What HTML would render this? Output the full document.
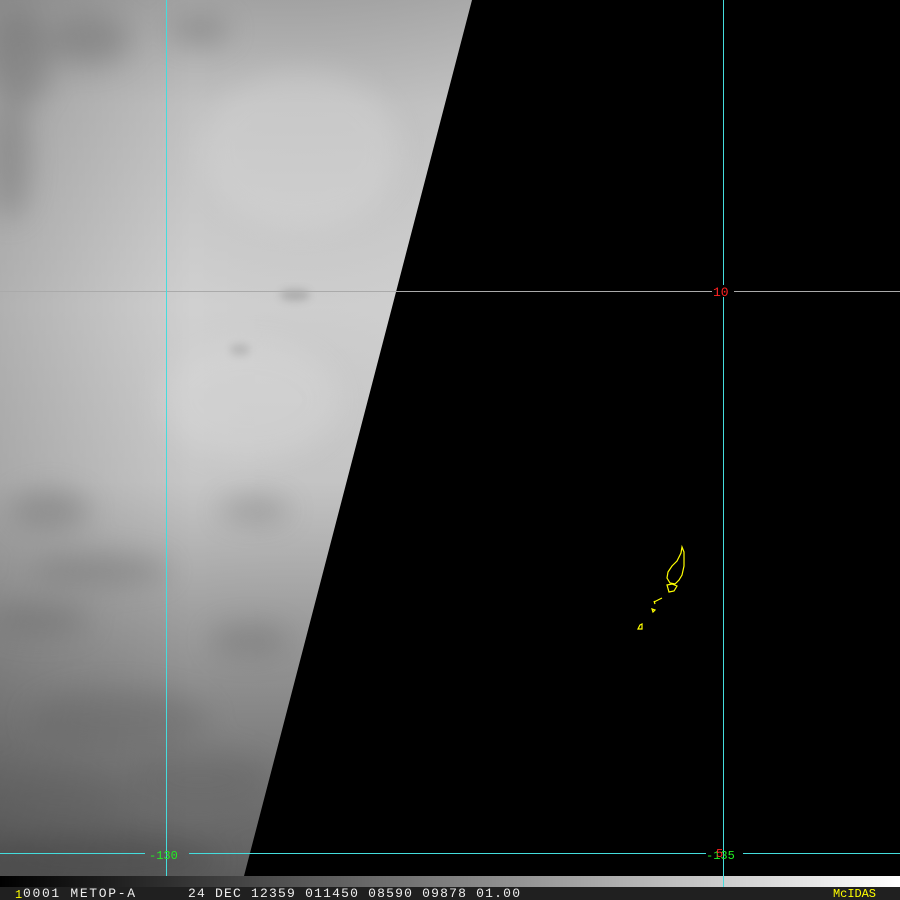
<!DOCTYPE html>
<html><head><meta charset="utf-8"><style>
html,body{margin:0;padding:0;background:#000;width:900px;height:900px;overflow:hidden}
svg{display:block}
</style></head><body>
<svg width="900" height="900" viewBox="0 0 900 900" xmlns="http://www.w3.org/2000/svg">
<defs>
<linearGradient id="cg" x1="0" y1="0" x2="0" y2="1">
<stop offset="0" stop-color="#a4a4a4"/>
<stop offset="0.12" stop-color="#c0c0c0"/>
<stop offset="0.35" stop-color="#d0d0d0"/>
<stop offset="0.55" stop-color="#c6c6c6"/>
<stop offset="0.7" stop-color="#a0a0a0"/>
<stop offset="0.85" stop-color="#808080"/>
<stop offset="1" stop-color="#5e5e5e"/>
</linearGradient>
<linearGradient id="hg" x1="0" y1="0" x2="1" y2="0">
<stop offset="0" stop-color="#000" stop-opacity="0.15"/>
<stop offset="0.4" stop-color="#000" stop-opacity="0"/>
<stop offset="1" stop-color="#fff" stop-opacity="0.06"/>
</linearGradient>
<linearGradient id="bar" x1="0" y1="0" x2="1" y2="0">
<stop offset="0" stop-color="#000"/>
<stop offset="1" stop-color="#fff"/>
</linearGradient>
<clipPath id="sw"><polygon points="0,0 472,0 244,876 0,876"/></clipPath>
<filter id="b8"><feGaussianBlur stdDeviation="14"/></filter>
<filter id="b4"><feGaussianBlur stdDeviation="4"/></filter>
</defs>
<rect width="900" height="900" fill="#000"/>
<g clip-path="url(#sw)">
<rect width="480" height="876" fill="url(#cg)"/>
<rect width="480" height="876" fill="url(#hg)"/>
<g filter="url(#b8)" fill="#606060" opacity="0.35">
<ellipse cx="20" cy="60" rx="30" ry="50"/>
<ellipse cx="90" cy="40" rx="40" ry="25"/>
<ellipse cx="200" cy="30" rx="30" ry="15"/>
<ellipse cx="10" cy="160" rx="20" ry="60"/>
<ellipse cx="50" cy="510" rx="40" ry="20"/>
<ellipse cx="255" cy="510" rx="35" ry="12"/>
<ellipse cx="100" cy="570" rx="70" ry="15"/>
<ellipse cx="40" cy="620" rx="50" ry="15"/>
<ellipse cx="250" cy="640" rx="40" ry="15"/>
<ellipse cx="120" cy="720" rx="90" ry="30"/>
<ellipse cx="200" cy="780" rx="70" ry="30"/>
<ellipse cx="60" cy="800" rx="70" ry="30"/>
<ellipse cx="100" cy="860" rx="120" ry="25" fill="#404040"/>
</g>
<g filter="url(#b4)" fill="#808080" opacity="0.4">
<ellipse cx="240" cy="350" rx="10" ry="6"/>
<ellipse cx="295" cy="295" rx="15" ry="6"/>
</g>
<g filter="url(#b8)" fill="#e0e0e0" opacity="0.3">
<ellipse cx="300" cy="150" rx="100" ry="80"/>
<ellipse cx="250" cy="400" rx="90" ry="60"/>
</g>
</g>
<!-- grid -->
<line x1="0" y1="291.5" x2="900" y2="291.5" stroke="#aaa" stroke-width="1"/>
<line x1="166.5" y1="0" x2="166.5" y2="888" stroke="#4dd" stroke-width="1"/>
<line x1="723.5" y1="0" x2="723.5" y2="888" stroke="#4dd" stroke-width="1"/>
<line x1="0" y1="853.5" x2="145" y2="853.5" stroke="#4dd"/>
<line x1="189" y1="853.5" x2="706" y2="853.5" stroke="#4dd"/>
<line x1="743" y1="853.5" x2="900" y2="853.5" stroke="#4dd"/>
<rect x="712" y="285" width="22" height="12" fill="#000"/>
<text x="713" y="296" font-family="Liberation Mono,monospace" font-size="13" fill="#f22">10</text>
<text x="149" y="859" font-family="Liberation Mono,monospace" font-size="12" fill="#2e2">-130</text>
<text x="706" y="859" font-family="Liberation Mono,monospace" font-size="12" fill="#2e2">-135</text>
<text x="716" y="857" font-family="Liberation Mono,monospace" font-size="12" fill="#f22">5</text>
<!-- island -->
<g fill="none" stroke="#ff0" stroke-width="1.2">
<path d="M682,547 L684,552 L684,566 L682,575 L679,580 L675,584 L670,583 L667,578 L668,572 L672,566 L677,561 L681,553 Z"/>
<path d="M667,585 L672,584 L677,586 L674,591 L669,592 Z"/>
<path d="M654,602 L658,600 L662,598 M654,601 L655,604"/>
<path d="M652,609 L655,610 L653,612 Z"/>
<path d="M640,625 L642,624 L642,629 L638,629 Z"/>
</g>
<!-- bottom bars -->
<rect x="0" y="876" width="900" height="11" fill="url(#bar)"/>
<line x1="723.5" y1="876" x2="723.5" y2="888" stroke="#4dd"/>
<rect x="0" y="887" width="900" height="13" fill="#202020"/>
<text x="15" y="898" font-family="Liberation Mono,monospace" font-size="12" fill="#ff0">1</text>
<text x="23" y="897" font-family="Liberation Mono,monospace" font-size="13" fill="#eee" textLength="112" lengthAdjust="spacing">0001 METOP-A</text>
<text x="188" y="897" font-family="Liberation Mono,monospace" font-size="13" fill="#eee" textLength="332" lengthAdjust="spacing">24 DEC 12359 011450 08590 09878 01.00</text>
<text x="833" y="897" font-family="Liberation Mono,monospace" font-size="12" fill="#ff0" textLength="43" lengthAdjust="spacing">McIDAS</text>
</svg>
</body></html>
